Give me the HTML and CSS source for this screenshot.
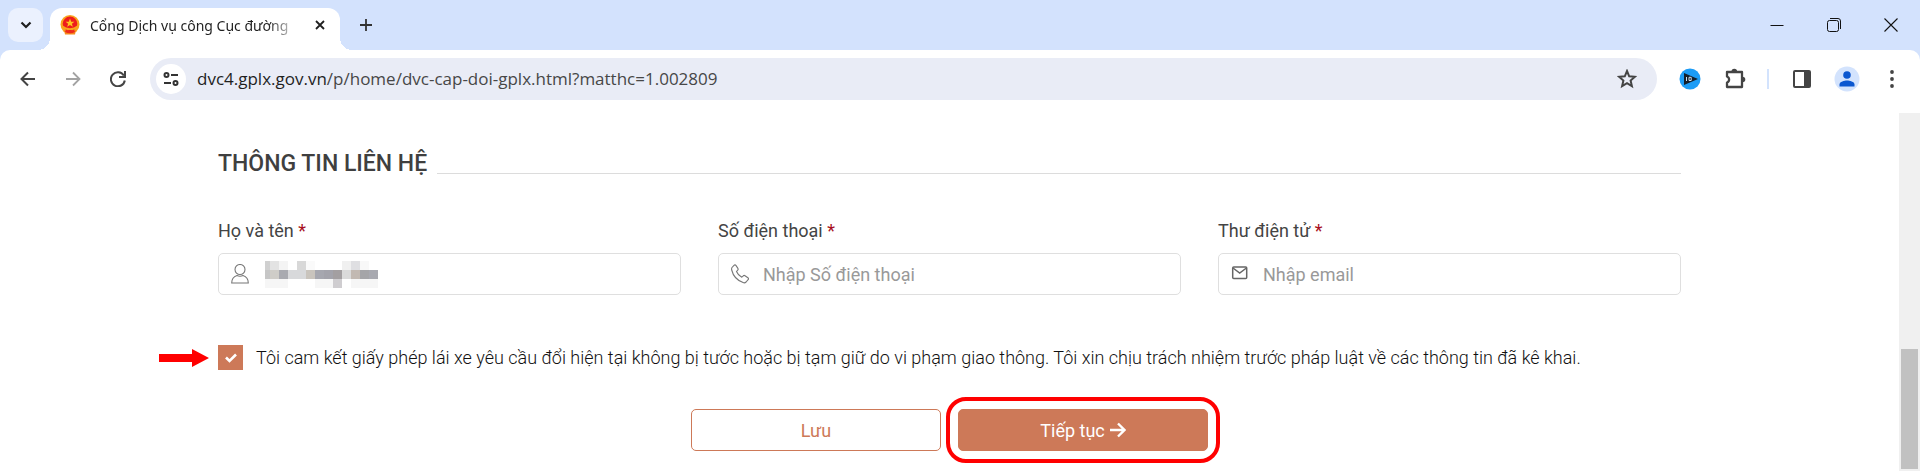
FILE: index.html
```
<!DOCTYPE html>
<html lang="vi">
<head>
    <meta charset="UTF-8">
    <meta name="viewport" content="width=device-width, initial-scale=1.0">
    <title>Cổng Dịch vụ công Cục đường bộ</title>
    <link rel="stylesheet" href="styles.css">
</head>
<body>
    <header class="browser">
        <div class="tab-strip">
            <button class="tab-search" type="button" aria-label="Tìm kiếm thẻ">
                <svg width="12" height="8" viewBox="0 0 12 8"><path d="M1.500 1.500 6 6l4.500-4.500" fill="none" stroke="#1f1f1f" stroke-width="2.200"/></svg>
            </button>
            <div class="tab">
                <svg class="favicon" width="20" height="20" viewBox="0 0 20 20">
                    <circle cx="10" cy="9.500" r="9.500" fill="#f9a51d"/>
                    <path d="M4 15h12l-1 4.500H5z" fill="#f58a1c"/>
                    <circle cx="10" cy="8.800" r="7.300" fill="#ee1c1c"/>
                    <path d="m10 3.500 1.200 3.200h3.200L11.900 8.700l.9 3L10 9.900l-2.800 1.800.9-3L5.600 6.700h3.200z" fill="#ffc31f"/>
                    <path d="M2.500 11.500c3.500 3.500 11.500 3.500 15 0" fill="none" stroke="#f9a51d" stroke-width="1.800"/>
                    <path d="M5.500 15.800c3 1.500 6 1.500 9 0" fill="none" stroke="#ee2a1b" stroke-width="2.500"/>
                </svg>
                <span class="tab-title">Cổng Dịch vụ công Cục đường</span>
                <button class="tab-close" type="button" aria-label="Đóng thẻ">
                    <svg width="10" height="10" viewBox="0 0 10 10"><path d="m1 1 8 8M9 1 1 9" stroke="#1f1f1f" stroke-width="1.800"/></svg>
                </button>
            </div>
            <button class="icon-btn new-tab" type="button" aria-label="Thẻ mới">
                <svg width="14" height="14" viewBox="0 0 14 14"><path d="M7 1v12M1 7h12" stroke="#333" stroke-width="1.800"/></svg>
            </button>
            <div class="window-controls">
                <button class="window-btn" type="button" aria-label="Thu nhỏ">
                    <svg width="14" height="14" viewBox="0 0 14 14"><path d="M.5 7.500h13" stroke="#111" stroke-width="1"/></svg>
                </button>
                <button class="window-btn" type="button" aria-label="Khôi phục">
                    <svg width="14" height="14" viewBox="0 0 14 14" fill="none" stroke="#111"><rect x=".5" y="2.500" width="11" height="11" rx="2"/><path d="M3 .5h8a2.500 2.500 0 0 1 2.500 2.500v8"/></svg>
                </button>
                <button class="window-btn" type="button" aria-label="Đóng">
                    <svg width="14" height="14" viewBox="0 0 14 14"><path d="m.5.5 13 13M13.500.5l-13 13" stroke="#111" stroke-width="1.100"/></svg>
                </button>
            </div>
        </div>
        <div class="toolbar">
            <button class="icon-btn" type="button" aria-label="Quay lại">
                <svg width="16" height="16" viewBox="0 0 16 16" fill="none" stroke="#444" stroke-width="2"><path d="M15 8H2M8 1.500 1.500 8 8 14.500"/></svg>
            </button>
            <button class="icon-btn" type="button" aria-label="Tiến" disabled>
                <svg width="16" height="16" viewBox="0 0 16 16" fill="none" stroke="#a3a3a3" stroke-width="1.800"><path d="M1 8h13M8 1.500 14.500 8 8 14.500"/></svg>
            </button>
            <button class="icon-btn" type="button" aria-label="Tải lại">
                <svg width="16" height="16" viewBox="0 0 16 16" fill="none" stroke="#444" stroke-width="2"><path d="M13.800 4.500A7 7 0 1 0 14.800 9.500M15 0v6H9"/></svg>
            </button>
            <div class="omnibox">
                <button class="site-info" type="button" aria-label="Thông tin trang web">
                    <svg width="16" height="14" viewBox="0 0 16 14" fill="none" stroke="#333" stroke-width="2"><circle cx="3.500" cy="3" r="2"/><path d="M8 3h7M1 11h7"/><circle cx="12.500" cy="11" r="2"/></svg>
                </button>
                <span class="url"><span class="url-host">dvc4.gplx.gov.vn</span>/p/home/dvc-cap-doi-gplx.html?matthc=1.002809</span>
                <button class="icon-btn star" type="button" aria-label="Đánh dấu trang">
                    <svg width="20" height="20" viewBox="0 0 20 20"><path d="m10 2 2.200 5.300 5.700.5-4.300 3.700 1.300 5.600L10 14.100l-4.900 3 1.300-5.600L2.100 7.800l5.700-.5z" fill="none" stroke="#444" stroke-width="2"/></svg>
                </button>
            </div>
            <div class="toolbar-actions">
                <button class="icon-btn" type="button" aria-label="Tiện ích video">
                    <svg width="22" height="22" viewBox="0 0 22 22"><circle cx="11" cy="11" r="10.500" fill="#1c9cf6"/><path d="M5 5 19 11 5 17z" fill="#14202c"/><path d="M7.500 9v4M10 9.300h2.200v3.200H10z" fill="none" stroke="#cfe3f5" stroke-width="1"/></svg>
                </button>
                <button class="icon-btn" type="button" aria-label="Tiện ích">
                    <svg width="22" height="22" viewBox="0 0 22 22"><path d="M3 4h15v15H3v-4.500a3.200 3.200 0 0 0 0-6z" fill="none" stroke="#444" stroke-width="2.300" stroke-linejoin="round"/><path d="M7.500 3.500a2.800 2.800 0 0 1 5.600 0zM18.500 8.700a2.800 2.800 0 0 1 0 5.600z" fill="#444"/></svg>
                </button>
                <span class="divider"></span>
                <button class="icon-btn" type="button" aria-label="Bảng điều khiển bên">
                    <svg width="18" height="18" viewBox="0 0 18 18"><rect x="1" y="1" width="16" height="16" rx="1" fill="none" stroke="#444" stroke-width="2"/><path d="M11 1h6v16h-6z" fill="#444"/></svg>
                </button>
                <button class="icon-btn" type="button" aria-label="Hồ sơ">
                    <svg width="26" height="26" viewBox="0 0 26 26"><circle cx="13" cy="13" r="12.500" fill="#d3e3fd"/><circle cx="13" cy="9" r="3.800" fill="#0b57d0"/><path d="M5.500 20.500v-2c0-3 5-4 7.500-4s7.500 1 7.500 4v2z" fill="#0b57d0"/></svg>
                </button>
                <button class="icon-btn" type="button" aria-label="Menu">
                    <svg width="4" height="18" viewBox="0 0 4 18" fill="#444"><circle cx="2" cy="2" r="1.900"/><circle cx="2" cy="9" r="1.900"/><circle cx="2" cy="16" r="1.900"/></svg>
                </button>
            </div>
        </div>
    </header>

    <div class="viewport">
        <main class="page">
            <form class="container">
                <h2 class="section-title">THÔNG TIN LIÊN HỆ</h2>

                <div class="fields">
                    <div class="field">
                        <label for="fullname">Họ và tên <span class="required">*</span></label>
                        <div class="input-box">
                            <svg class="input-icon" width="18" height="20" viewBox="0 0 18 20" fill="none" stroke="#777" stroke-width="1.100"><circle cx="9" cy="5.500" r="5"/><path d="M.7 19c0-4 2.300-6.500 5.300-7.500 2 1 4 1 6 0 3 1 5.300 3.500 5.300 7.500z"/></svg>
                            <input type="text" id="fullname" name="fullname">
                            <!-- masked name -->
                            <svg class="masked" width="113" height="27" viewBox="0 0 113 27" shape-rendering="crispEdges">
                                <path d="M0 0h5v9H0z" fill="#d0d0d0"/>
                                <path d="M5 0h9v9H5z" fill="#e3e3e3"/>
                                <path d="M14 0h9v9h-9z" fill="#f4f4f4"/>
                                <path d="M32 0h9v9h-9z" fill="#d8d8d8"/>
                                <path d="M41 0h9v9h-9z" fill="#fafafa"/>
                                <path d="M77 0h9v9h-9z" fill="#f0f0f0"/>
                                <path d="M86 0h9v9h-9z" fill="#dfdfe2"/>
                                <path d="M95 0h9v9h-9z" fill="#f8f8f8"/>
                                <path d="M0 9h5v9H0z" fill="#c6c6c6"/>
                                <path d="M5 9h9v9H5z" fill="#cfcdc8"/>
                                <path d="M14 9h9v9h-9z" fill="#a9aab0"/>
                                <path d="M23 9h18v9H23z" fill="#d8d9db"/>
                                <path d="M41 9h9v9h-9z" fill="#c9c4bd"/>
                                <path d="M50 9h9v9h-9z" fill="#a6a7af"/>
                                <path d="M59 9h9v9h-9z" fill="#a3a3ab"/>
                                <path d="M68 9h9v9h-9z" fill="#a39fa1"/>
                                <path d="M77 9h9v9h-9z" fill="#dadada"/>
                                <path d="M86 9h9v9h-9z" fill="#c2b9b2"/>
                                <path d="M95 9h9v9h-9z" fill="#a5a5a8"/>
                                <path d="M104 9h9v9h-9z" fill="#a8a9b0"/>
                                <path d="M0 18h23v9H0zM50 18h18v9H50zM86 18h27v9H86z" fill="#f6f6f6"/>
                                <path d="M68 18h9v9h-9z" fill="#cfcdd0"/>
                            </svg>
                        </div>
                    </div>
                    <div class="field">
                        <label for="phone">Số điện thoại <span class="required">*</span></label>
                        <div class="input-box">
                            <svg class="input-icon" width="18" height="20" viewBox="0 0 18 20" fill="none" stroke="#777" stroke-width="1.100"><path d="M1 3.500 3 1.300c.6-.6 1.400-.5 1.900.1l2 3c.4.7.3 1.300-.2 1.800L5.500 7.500c1 2.500 3 4.500 5.300 5.700l1.500-1.400c.5-.4 1.100-.5 1.700-.1l2.900 2c.7.5.8 1.300.2 1.900l-2 2.400c-.8.8-2 1-3 .6C6.500 16.500 2 11.500.7 6 .5 5 .5 4.200 1 3.500z"/></svg>
                            <input type="tel" id="phone" name="phone" placeholder="Nhập Số điện thoại">
                        </div>
                    </div>
                    <div class="field">
                        <label for="email">Thư điện tử <span class="required">*</span></label>
                        <div class="input-box">
                            <svg class="input-icon" width="18" height="20" viewBox="0 0 18 20" fill="none" stroke="#666" stroke-width="1.500"><rect x="1.700" y="3" width="14" height="11.500" rx="1"/><path d="m2 4 6.700 5 6.700-5"/></svg>
                            <input type="email" id="email" name="email" placeholder="Nhập email">
                        </div>
                    </div>
                </div>

                <div class="commit">
                    <svg class="pointer" width="50" height="18" viewBox="0 0 50 18"><path d="M0 5h33V0l17 9-17 9v-5H0z" fill="#f00"/></svg>
                    <input type="checkbox" id="commit" name="commit" checked>
                    <label for="commit">Tôi cam kết giấy phép lái xe yêu cầu đổi hiện tại không bị tước hoặc bị tạm giữ do vi phạm giao thông. Tôi xin chịu trách nhiệm trước pháp luật về các thông tin đã kê khai.</label>
                </div>

                <div class="actions">
                    <button class="btn btn-outline" type="button">Lưu</button>
                    <button class="btn btn-primary" type="submit">Tiếp tục
                        <svg width="16" height="16" viewBox="0 0 16 16" fill="none" stroke="#fff" stroke-width="2.400"><path d="M0 8h14M8 1.500 14.500 8 8 14.500"/></svg>
                    </button>
                </div>
            </form>
        </main>
        <div class="scrollbar"><div class="scrollbar-thumb"></div></div>
    </div>
</body>
</html>
```
FILE: styles.css
```
* {
    box-sizing: border-box;
}

body {
    display: flex;
    flex-direction: column;
    min-height: 100vh;
    margin: 0;
    font-family: Roboto, sans-serif;
    font-size: 18px;
    color: #444;
    background-color: white;
}

button {
    padding: 0;
    border: none;
    background: none;
    font: inherit;
    cursor: pointer;
}

svg {
    display: block;
    flex-shrink: 0;
}

/* browser window */
.browser {
    font-family: "Open Sans", sans-serif;
    background-color: #d3e2fd;
}

.tab-strip {
    display: flex;
    align-items: center;
    height: 50px;
    padding-left: 8px;
}

.tab-search {
    display: flex;
    align-items: center;
    justify-content: center;
    width: 35px;
    height: 34px;
    border-radius: 10px;
    background-color: #ebf1fe;
}

.tab {
    position: relative;
    display: flex;
    align-items: center;
    align-self: flex-end;
    width: 290px;
    height: 42px;
    margin-left: 7px;
    padding: 0 15px 8px 10px;
    border-radius: 12px 12px 0 0;
    background-color: white;
}

/* curved feet of the active tab */
.tab::before,
.tab::after {
    content: "";
    position: absolute;
    bottom: 0;
    width: 12px;
    height: 12px;
}

.tab::before {
    right: 100%;
    background: radial-gradient(circle at 0 0, transparent 12px, white 12px);
}

.tab::after {
    left: 100%;
    background: radial-gradient(circle at 100% 0, transparent 12px, white 12px);
}

.tab-title {
    flex: 1;
    margin: 0 16px 0 10px;
    white-space: nowrap;
    font-family: "Noto Sans", sans-serif;
    font-size: 14px;
    color: #1f1f1f;
    -webkit-mask-image: linear-gradient(to right, black 85%, transparent);
    mask-image: linear-gradient(to right, black 85%, transparent);
}

.icon-btn {
    display: flex;
    align-items: center;
    justify-content: center;
    width: 45px;
    height: 34px;
}

.new-tab {
    margin-left: 3px;
}

.window-controls {
    display: flex;
    margin-left: auto;
    padding-right: 1px;
}

.window-btn {
    display: flex;
    align-items: center;
    justify-content: center;
    width: 57px;
    height: 48px;
}

.toolbar {
    display: flex;
    align-items: center;
    height: 63px;
    padding: 0 6px 6px 5px;
    border-radius: 10px 10px 0 0;
    background-color: white;
}

.omnibox {
    flex: 1;
    display: flex;
    align-items: center;
    height: 42px;
    margin-left: 10px;
    padding: 0 8px 0 6px;
    border-radius: 21px;
    background-color: #e9ecf6;
}

.site-info {
    display: flex;
    align-items: center;
    justify-content: center;
    width: 30px;
    height: 30px;
    border-radius: 50%;
    background-color: white;
}

.url {
    flex: 1;
    margin-left: 11px;
    font-size: 17px;
    color: #474747;
}

.url-host {
    color: #1f1f1f;
}

.toolbar-actions {
    display: flex;
    align-items: center;
    margin-left: 10px;
}

.divider {
    width: 2px;
    height: 20px;
    margin: 0 10px;
    background-color: #d3e3fd;
}

/* page */
.viewport {
    flex: 1;
    display: flex;
}

.page {
    flex: 1;
}

.container {
    max-width: 1463px;
    margin: 0 auto;
    padding: 37px 0 8px;
}

.section-title {
    display: flex;
    align-items: flex-end;
    gap: 10px;
    margin: 0;
    font-size: 23px;
    font-weight: 500;
    line-height: 28px;
    color: #3f3f3f;
}

.section-title::after {
    content: "";
    flex: 1;
    border-bottom: 1px solid #dcdcdc;
    margin-bottom: 4px;
}

.fields {
    display: grid;
    grid-template-columns: repeat(3, 1fr);
    gap: 37px;
    margin-top: 40px;
}

.field label {
    display: block;
    margin-bottom: 9px;
    line-height: 26px;
}

.required {
    color: #a80f22;
}

.input-box {
    position: relative;
    display: flex;
    align-items: center;
}

.input-box input {
    width: 100%;
    height: 42px;
    padding: 0 16px 0 44px;
    border: 1px solid #dfdfdf;
    border-radius: 5px;
    font: inherit;
    color: #444;
    background-color: white;
}

.input-box input::placeholder {
    color: #999;
}

.input-icon {
    position: absolute;
    left: 13px;
}

.masked {
    position: absolute;
    left: 47px;
}

.commit {
    position: relative;
    display: flex;
    align-items: center;
    gap: 13px;
    margin-top: 50px;
    font-weight: 300;
    color: #111;
}

.commit input {
    appearance: none;
    flex-shrink: 0;
    width: 25px;
    height: 25px;
    margin: 0;
    background-color: #cd7958;
}

.commit input:checked {
    background-image: url("data:image/svg+xml,%3Csvg xmlns='http://www.w3.org/2000/svg' width='12' height='10' viewBox='0 0 12 10'%3E%3Cpath d='M1 4.500l3.500 3.500L11 1.500' fill='none' stroke='white' stroke-width='2.600'/%3E%3C/svg%3E");
    background-position: center;
    background-repeat: no-repeat;
}

.pointer {
    position: absolute;
    right: 100%;
    margin-right: 9px;
}

.actions {
    display: flex;
    justify-content: center;
    gap: 17px;
    margin-top: 39px;
}

.btn {
    position: relative;
    display: flex;
    align-items: center;
    justify-content: center;
    gap: 5px;
    width: 250px;
    height: 42px;
    border: 1px solid #cd7958;
    border-radius: 5px;
}

.btn-outline {
    color: #cd7958;
    background-color: white;
}

.btn-primary {
    color: white;
    background-color: #cd7958;
}

/* highlight ring */
.btn-primary::after {
    content: "";
    position: absolute;
    inset: -13px;
    border: 4px solid #f00;
    border-radius: 20px;
}

.scrollbar {
    width: 21px;
    padding: 236px 2px 2px;
    background-color: #f0f0f0;
}

.scrollbar-thumb {
    height: 100%;
    background-color: #c1c1c1;
}
```
